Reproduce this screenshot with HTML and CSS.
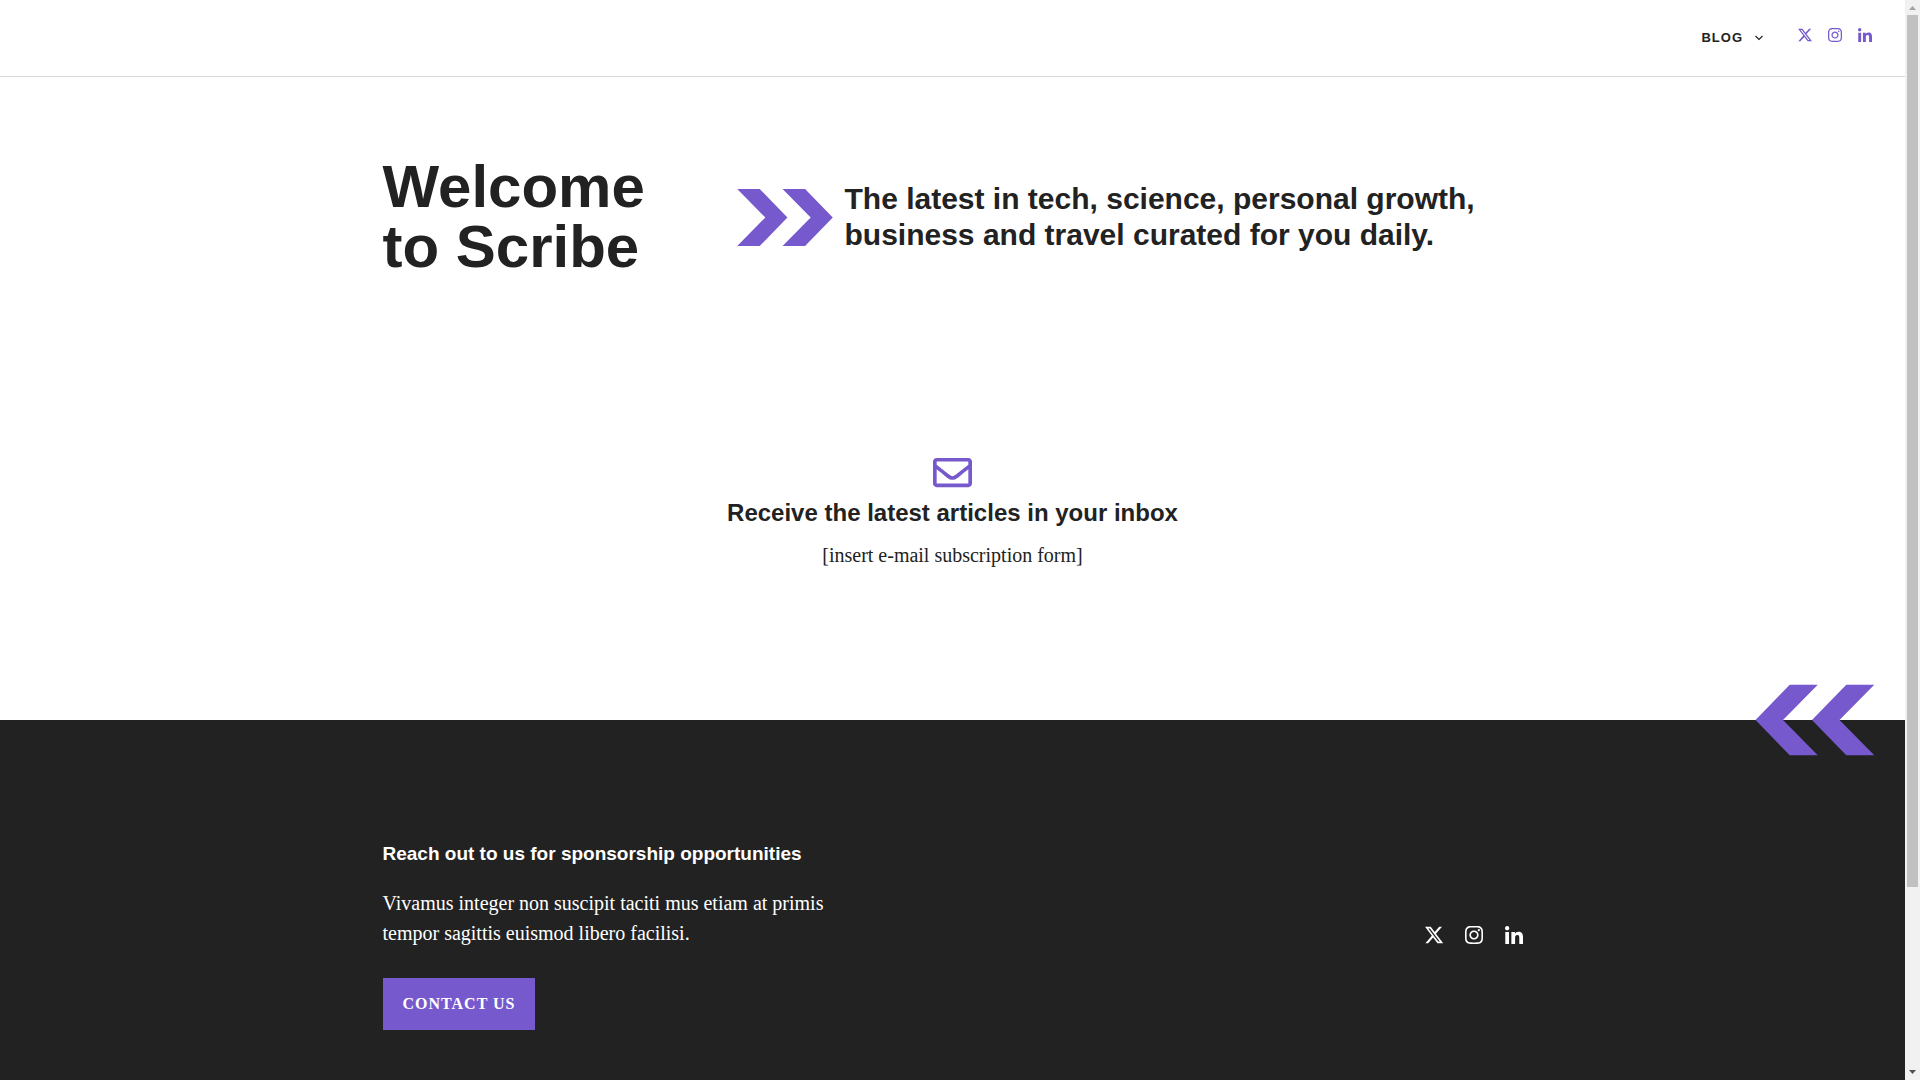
FILE: index.html
```html
<!DOCTYPE html>
<html lang="en">
<head>
<meta charset="utf-8">
<meta name="viewport" content="width=device-width, initial-scale=1">
<title>Scribe</title>
<link rel="stylesheet" href="styles.css">
</head>
<body>
<svg class="sprite" aria-hidden="true">
  <symbol id="x" viewBox="26 26 460 460"><path d="M389.2 48h70.600L305.600 224.200 487 464H345L233.700 318.600 106.500 464H35.800L200.700 275.500 26.800 48H172.400L272.900 180.900 389.200 48zM364.400 421.800h39.100L151.100 88h-42L364.400 421.800z"/></symbol>
  <symbol id="instagram" viewBox="0 0 448 448"><path d="M224.100 109c-63.600 0-114.900 51.300-114.900 114.900s51.300 114.900 114.900 114.900S339 287.500 339 223.900 287.700 109 224.100 109zm0 189.600c-41.100 0-74.700-33.500-74.700-74.700s33.500-74.700 74.700-74.700 74.700 33.500 74.700 74.700-33.600 74.700-74.700 74.700zm146.400-194.300c0 14.900-12 26.800-26.800 26.800-14.900 0-26.800-12-26.800-26.800s12-26.800 26.800-26.800 26.800 12 26.800 26.800zm76.100 27.200c-1.700-35.900-9.900-67.700-36.200-93.900-26.200-26.200-58-34.400-93.900-36.200-37-2.100-147.900-2.100-184.900 0-35.800 1.700-67.600 9.900-93.900 36.100s-34.400 58-36.200 93.900c-2.100 37-2.100 147.900 0 184.900 1.700 35.900 9.900 67.700 36.200 93.900s58 34.400 93.900 36.200c37 2.100 147.900 2.100 184.900 0 35.900-1.700 67.700-9.900 93.900-36.200 26.200-26.200 34.400-58 36.200-93.900 2.100-37 2.100-147.800 0-184.800zM398.800 356c-7.800 19.600-22.900 34.700-42.600 42.600-29.500 11.700-99.500 9-132.100 9s-102.700 2.600-132.100-9c-19.600-7.800-34.700-22.900-42.600-42.600-11.700-29.500-9-99.500-9-132.100s-2.600-102.700 9-132.100c7.800-19.600 22.900-34.700 42.600-42.600 29.500-11.700 99.500-9 132.100-9s102.700-2.600 132.100 9c19.600 7.800 34.700 22.900 42.600 42.600 11.700 29.500 9 99.500 9 132.100s2.700 102.700-9 132.100z"/></symbol>
  <symbol id="linkedin" viewBox="0 0 448 448"><path d="M100.280 448H7.400V148.900h92.880zM53.790 108.100C24.090 108.100 0 83.500 0 53.800a53.790 53.790 0 0 1 107.580 0c0 29.700-24.100 54.300-53.790 54.300zM447.900 448h-92.680V302.400c0-34.700-.7-79.200-48.290-79.200-48.290 0-55.690 37.700-55.690 76.700V448h-92.780V148.900h89.080v40.800h1.300c12.400-23.500 42.690-48.300 87.880-48.300 94 0 111.280 61.900 111.280 142.300V448z"/></symbol>
</svg>
<div class="window">
  <div class="page">
    <header class="site-header">
      <nav class="menu" aria-label="Primary">
        <a href="#blog" class="menu-link">Blog
          <svg class="caret" viewBox="0 0 10 8" aria-hidden="true"><path d="M1.500 2l3.500 3.500L8.500 2"/></svg>
        </a>
      </nav>
      <div class="social">
        <a href="#x" aria-label="X"><svg><use href="#x"/></svg></a>
        <a href="#instagram" aria-label="Instagram"><svg><use href="#instagram"/></svg></a>
        <a href="#linkedin" aria-label="LinkedIn"><svg><use href="#linkedin"/></svg></a>
      </div>
    </header>

    <main>
      <section class="hero container">
        <h1>Welcome<br>to Scribe</h1>
        <div class="tagline">
          <svg class="arrows" viewBox="0 0 119 71" aria-hidden="true"><path d="M0 0H28L62.500 35.500 28 71H0L35 35.500zM56.500 0H84.500L119 35.500 84.500 71H56.500L91.500 35.500z"/></svg>
          <h2>The latest in tech, science, personal growth, business and travel curated for you daily.</h2>
        </div>
      </section>

      <section class="newsletter container">
        <svg class="envelope" viewBox="0 0 512 512" aria-hidden="true"><path d="M464 64H48C21.490 64 0 85.490 0 112v288c0 26.510 21.490 48 48 48h416c26.510 0 48-21.490 48-48V112c0-26.510-21.490-48-48-48zm0 48v40.805c-22.422 18.259-58.168 46.651-134.587 106.490-16.841 13.247-50.201 45.072-73.413 44.701-23.208.375-56.579-31.459-73.413-44.701C106.180 199.465 70.425 171.067 48 152.805V112h416zM48 400V214.398c22.914 18.251 55.409 43.862 104.938 82.646 21.857 17.205 60.134 55.186 103.062 54.955 42.717.231 80.509-37.199 103.053-54.947 49.528-38.783 82.032-64.401 104.947-82.653V400H48z"/></svg>
        <h3>Receive the latest articles in your inbox</h3>
        <p>[insert e-mail subscription form]</p>
      </section>
    </main>

    <footer class="site-footer">
      <svg class="arrows-back" viewBox="0 0 119 71" aria-hidden="true"><path d="M119 0H91L56.500 35.500 91 71H119L84 35.500zM62.500 0H34.500L0 35.500 34.500 71H62.500L27.500 35.500z"/></svg>
      <div class="footer-inner container">
        <div class="contact">
          <h4>Reach out to us for sponsorship opportunities</h4>
          <p>Vivamus integer non suscipit taciti mus etiam at primis tempor sagittis euismod libero facilisi.</p>
          <a href="#contact" class="button">Contact us</a>
        </div>
        <div class="social social-large">
          <a href="#x" aria-label="X"><svg><use href="#x"/></svg></a>
          <a href="#instagram" aria-label="Instagram"><svg><use href="#instagram"/></svg></a>
          <a href="#linkedin" aria-label="LinkedIn"><svg><use href="#linkedin"/></svg></a>
        </div>
      </div>
    </footer>
  </div>

  <div class="scrollbar" aria-hidden="true">
    <svg class="scroll-arrow" viewBox="0 0 15 15"><path class="dim" d="M4 10L7.500 6L11 10z"/></svg>
    <div class="scroll-track"><div class="scroll-thumb"></div></div>
    <svg class="scroll-arrow" viewBox="0 0 15 15"><path d="M4 5L7.500 9L11 5z"/></svg>
  </div>
</div>
</body>
</html>
```
FILE: styles.css
```css
:root {
  --accent: #7659cc;
  --dark: #222222;
  --sans: "Liberation Sans", Arial, sans-serif;
  --serif: "Liberation Serif", "Times New Roman", serif;
}

* { box-sizing: border-box; }

body {
  margin: 0;
  background: #ffffff;
  color: var(--dark);
  font: 20px/30px var(--serif);
}

h1, h2, h3, h4, p { margin: 0; }

h1, h2, h3, h4 {
  font-family: var(--sans);
  font-weight: 700;
}

svg { display: block; }
a { color: inherit; text-decoration: none; }

.sprite {
  position: absolute;
  width: 0;
  height: 0;
}

.window {
  display: grid;
  grid-template-columns: minmax(0, 1fr) 15px;
  height: 100vh;
  overflow: hidden;
}

.page {
  display: flex;
  flex-direction: column;
  overflow: hidden;
}

.container {
  width: 100%;
  max-width: 1200px;
  margin: 0 auto;
  padding-left: 30px;
  padding-right: 30px;
}

/* Header */
.site-header {
  display: flex;
  justify-content: flex-end;
  align-items: flex-start;
  gap: 34px;
  padding: 23px 33px;
  border-bottom: 1px solid #d9dbdb;
}

.menu-link {
  display: flex;
  align-items: center;
  gap: 11px;
  font: 700 13px/30px var(--sans);
  letter-spacing: 1px;
  text-transform: uppercase;
}

.caret {
  width: 10px;
  height: 8px;
  fill: none;
  stroke: currentColor;
  stroke-width: 1.200;
}

.social {
  display: flex;
  gap: 16px;
  padding-top: 5px;
  color: var(--accent);
}

.social svg {
  width: 14px;
  height: 14px;
  fill: currentColor;
}

.social-large {
  gap: 22px;
  padding: 0;
  color: #ffffff;
}

.social-large svg {
  width: 18px;
  height: 18px;
}

/* Hero */
.hero {
  display: grid;
  grid-template-columns: 354px minmax(0, 1fr);
  align-items: center;
  padding-top: 80px;
  padding-bottom: 80px;
}

h1 { font-size: 60px; line-height: 60px; }
h2 { font-size: 30px; line-height: 36px; }

.tagline {
  display: flex;
  align-items: center;
  gap: 12px;
}

.arrows {
  flex: none;
  width: 96px;
  height: 57px;
  fill: var(--accent);
}

/* Newsletter */
.newsletter {
  display: flex;
  flex-direction: column;
  align-items: center;
  padding-top: 96px;
  padding-bottom: 150px;
  text-align: center;
}

.envelope {
  width: 39px;
  height: 39px;
  margin-bottom: 6px;
  fill: var(--accent);
}

h3 {
  margin-bottom: 12px;
  font-size: 24px;
  line-height: 30px;
}

/* Footer */
.site-footer {
  position: relative;
  flex: 1 0 auto;
  padding: 120px 0;
  background: var(--dark);
  color: #ffffff;
}

.arrows-back {
  position: absolute;
  top: 0;
  right: 30px;
  width: 120px;
  height: 71px;
  transform: translateY(-50%);
  fill: var(--accent);
}

.footer-inner {
  display: flex;
  justify-content: space-between;
  align-items: center;
}

.contact {
  display: flex;
  flex-direction: column;
  align-items: flex-start;
  max-width: 480px;
}

h4 {
  margin-bottom: 20px;
  font-size: 19px;
  line-height: 28px;
}

.button {
  margin-top: 30px;
  padding: 11px 20px;
  background: var(--accent);
  font-size: 16px;
  font-weight: 700;
  letter-spacing: 1px;
  text-transform: uppercase;
}

/* Scrollbar */
.scrollbar {
  display: flex;
  flex-direction: column;
  background: #f1f1f1;
}

.scroll-arrow {
  width: 15px;
  height: 15px;
  fill: #505050;
}

.scroll-arrow .dim { fill: #a3a3a3; }

.scroll-track {
  flex: 1;
  padding: 0 2px;
}

.scroll-thumb {
  height: 83%;
  background: #c1c1c1;
}
```
